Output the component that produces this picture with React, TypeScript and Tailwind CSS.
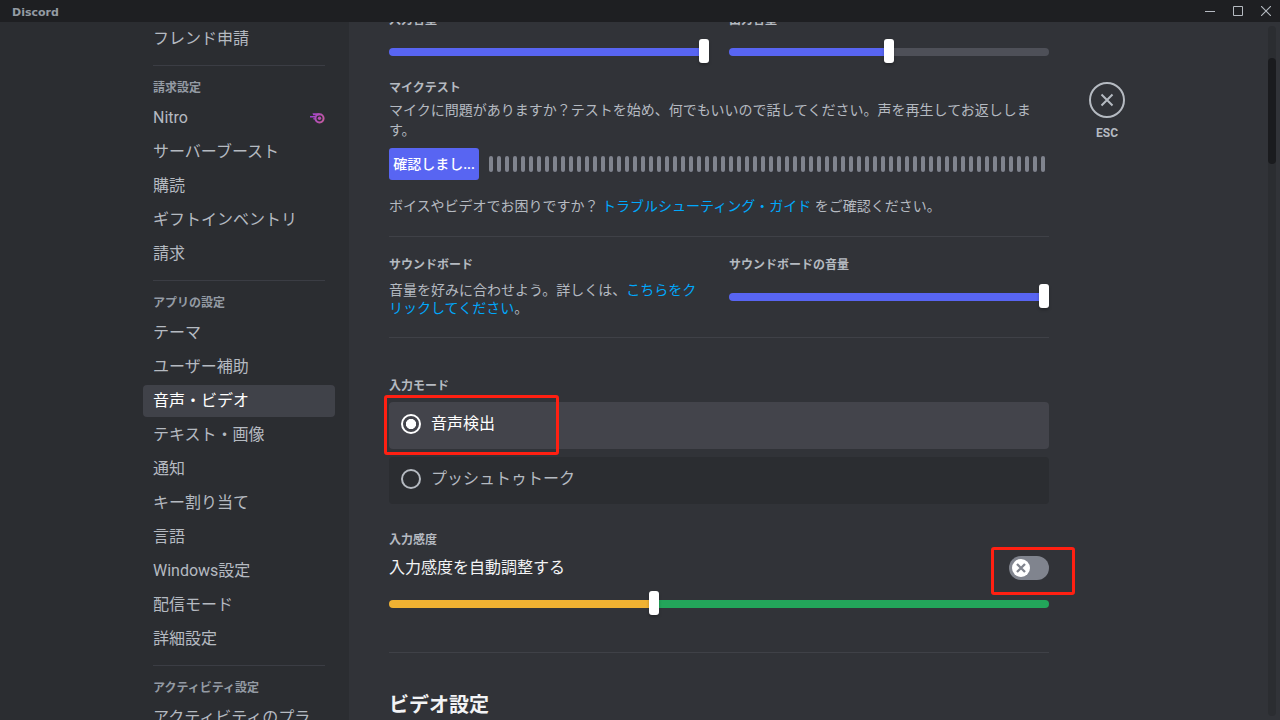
import { useState, type CSSProperties, type ReactNode } from "react";

type NavItem = { label: string; nitro?: boolean };
type NavGroup = { title?: string; items: NavItem[] };

const navGroups: NavGroup[] = [
  { items: [{ label: "フレンド申請" }] },
  {
    title: "請求設定",
    items: [
      { label: "Nitro", nitro: true },
      { label: "サーバーブースト" },
      { label: "購読" },
      { label: "ギフトインベントリ" },
      { label: "請求" },
    ],
  },
  {
    title: "アプリの設定",
    items: [
      { label: "テーマ" },
      { label: "ユーザー補助" },
      { label: "音声・ビデオ" },
      { label: "テキスト・画像" },
      { label: "通知" },
      { label: "キー割り当て" },
      { label: "言語" },
      { label: "Windows設定" },
      { label: "配信モード" },
      { label: "詳細設定" },
    ],
  },
  { title: "アクティビティ設定", items: [{ label: "アクティビティのプラ" }] },
];

function NitroIcon() {
  return (
    <svg width="16" height="16" viewBox="0 0 16 16" fill="none" aria-hidden="true">
      <defs>
        <linearGradient id="nitro" gradientUnits="userSpaceOnUse" x1="1" y1="4" x2="16" y2="10">
          <stop offset="0" stopColor="#9b3fd6" />
          <stop offset="1" stopColor="#c65c9a" />
        </linearGradient>
      </defs>
      <circle cx="10.500" cy="8.300" r="4.100" stroke="url(#nitro)" strokeWidth="2" />
      <circle cx="10.500" cy="8.300" r="1.700" fill="#b94fb4" />
      <path fill="url(#nitro)" d="M3.500 3.200H10.500V5.200H4.200zM1 6H7L6.300 7.400H1zM4 8.200H6.500V9.600H4.500z" />
    </svg>
  );
}

function TitleBar() {
  return (
    <header className="flex h-[22px] shrink-0 items-center justify-between bg-[#1e1f22] pl-3">
      <span className="pt-[3px] font-['DejaVu_Sans',sans-serif] text-[11px] leading-4 font-bold text-[#949ba4]">Discord</span>
      <div className="flex text-[#b5bac1]">
        <button type="button" aria-label="最小化" className="flex h-[22px] w-7 items-center justify-center">
          <svg width="10" height="10" viewBox="0 0 10 10" aria-hidden="true"><path d="M0 5h10v1H0z" fill="currentColor" /></svg>
        </button>
        <button type="button" aria-label="最大化" className="flex h-[22px] w-7 items-center justify-center">
          <svg width="10" height="10" viewBox="0 0 10 10" aria-hidden="true"><path d="M.5.5h9v9h-9z" fill="none" stroke="currentColor" /></svg>
        </button>
        <button type="button" aria-label="閉じる" className="flex h-[22px] w-7 items-center justify-center">
          <svg width="10" height="10" viewBox="0 0 10 10" aria-hidden="true"><path d="M0 0l10 10M10 0L0 10" stroke="currentColor" strokeWidth="1.1" /></svg>
        </button>
      </div>
    </header>
  );
}

function Sidebar() {
  const [active, setActive] = useState("音声・ビデオ");
  return (
    <div className="flex flex-[1_0_218px] justify-end overflow-hidden bg-[#2b2d31]">
      <nav aria-label="ユーザー設定" className="w-[212px] pt-px pr-[14px] pl-[6px]">
        {navGroups.map((group, index) => (
          <section key={index}>
            {index > 0 && <hr className="mx-[10px] mt-[10px] mb-2 border-[#3b3d44]" />}
            {group.title && (
              <h2 className="px-[10px] py-[6px] text-xs leading-4 font-bold text-[#949ba4]">{group.title}</h2>
            )}
            <ul>
              {group.items.map((item) => (
                <li key={item.label} className="mb-[2px]">
                  <button
                    type="button"
                    onClick={() => setActive(item.label)}
                    className={
                      item.label === active
                        ? "flex h-8 w-full items-center justify-between rounded bg-[#404249] px-[10px] text-left text-base leading-5 text-white"
                        : "flex h-8 w-full items-center justify-between rounded px-[10px] text-left text-base leading-5 text-[#b5bac1]"
                    }
                  >
                    <span>{item.label}</span>
                    {item.nitro && <NitroIcon />}
                  </button>
                </li>
              ))}
            </ul>
          </section>
        ))}
      </nav>
    </div>
  );
}

const thumb =
  "[&::-webkit-slider-thumb]:-mt-[9px] [&::-webkit-slider-thumb]:h-6 [&::-webkit-slider-thumb]:w-[10px] [&::-webkit-slider-thumb]:appearance-none [&::-webkit-slider-thumb]:rounded-[3px] [&::-webkit-slider-thumb]:bg-white [&::-webkit-slider-thumb]:shadow-[0_2px_3px_rgba(0,0,0,0.25)]";
const track =
  "[&::-webkit-slider-runnable-track]:h-2 [&::-webkit-slider-runnable-track]:rounded [&::-webkit-slider-runnable-track]:bg-[linear-gradient(to_right,var(--fill)_var(--pos),var(--rest)_var(--pos))]";

function Slider({ label, initial, max = 100, fill = "#5865f2", rest = "#4e5058" }: {
  label: string;
  initial: number;
  max?: number;
  fill?: string;
  rest?: string;
}) {
  const [value, setValue] = useState(initial);
  const style = { "--pos": `${(value / max) * 100}%`, "--fill": fill, "--rest": rest } as CSSProperties;
  return (
    <input
      type="range"
      aria-label={label}
      min={0}
      max={max}
      value={value}
      onChange={(event) => setValue(Number(event.target.value))}
      style={style}
      className={`block h-6 w-full appearance-none bg-transparent ${track} ${thumb}`}
    />
  );
}

function Label({ children }: { children: ReactNode }) {
  return <h3 className="text-xs leading-4 font-bold text-[#b5bac1]">{children}</h3>;
}

function Highlight({ className }: { className: string }) {
  return <div aria-hidden="true" className={`pointer-events-none absolute rounded-[3px] border-[3px] border-[#ff2012] ${className}`} />;
}

function ModeOption({ label, checked, onSelect }: { label: string; checked: boolean; onSelect: () => void }) {
  return (
    <label
      className={
        checked
          ? "flex h-[47px] items-center gap-[10px] rounded bg-[#43444b] px-3 pb-[3px] text-base leading-5 text-white"
          : "flex h-[47px] items-center gap-[10px] rounded bg-[#2b2d31] px-3 pb-[3px] text-base leading-5 text-[#b5bac1]"
      }
    >
      <input
        type="radio"
        name="input-mode"
        checked={checked}
        onChange={onSelect}
        className="size-5 appearance-none rounded-full border-2 border-[#b5bac1] checked:border-white checked:bg-[radial-gradient(circle,#fff_42%,transparent_48%)]"
      />
      <span>{label}</span>
    </label>
  );
}

function VoiceSettings() {
  const [mode, setMode] = useState("voice");
  const [auto, setAuto] = useState(false);
  return (
    <main className="max-w-[740px] min-w-0 flex-1 px-10">
      <div className="-mt-[10px] grid grid-cols-2 gap-5">
        <div className="flex flex-col gap-3">
          <Label>入力音量</Label>
          <Slider label="入力音量" initial={100} />
        </div>
        <div className="flex flex-col gap-3">
          <Label>出力音量</Label>
          <Slider label="出力音量" initial={100} max={200} />
        </div>
      </div>

      <section className="mt-4">
        <Label>マイクテスト</Label>
        <p className="mt-1 text-sm leading-5 text-[#b5bac1]">
          マイクに問題がありますか？テストを始め、何でもいいので話してください。声を再生してお返しします。
        </p>
        <div className="mt-2 flex items-center gap-[10px]">
          <button type="button" className="h-8 w-[90px] shrink-0 rounded-[3px] bg-[#5865f2] text-sm leading-4 font-medium whitespace-nowrap text-white">
            確認しまし...
          </button>
          <div role="meter" aria-label="マイク入力レベル" aria-valuenow={0} className="flex flex-1 justify-between pr-1">
            {Array.from({ length: 70 }, (_, i) => (
              <span key={i} className="h-4 w-1 rounded-sm bg-[#80848e]" />
            ))}
          </div>
        </div>
        <p className="mt-4 text-sm leading-5 text-[#b5bac1]">
          ボイスやビデオでお困りですか？ <a href="#guide" className="text-[#00a8fc]">トラブルシューティング・ガイド</a> をご確認ください。
        </p>
      </section>

      <hr className="mt-5 border-[#3f4147]" />

      <section className="mt-5 grid grid-cols-2 gap-5">
        <div>
          <Label>サウンドボード</Label>
          <p className="mt-2 text-sm leading-[18px] text-[#b5bac1]">
            音量を好みに合わせよう。詳しくは、<a href="#soundboard" className="text-[#00a8fc]">こちらをクリックしてください</a>。
          </p>
        </div>
        <div>
          <Label>サウンドボードの音量</Label>
          <div className="mt-3">
            <Slider label="サウンドボードの音量" initial={100} />
          </div>
        </div>
      </section>

      <hr className="mt-5 border-[#3f4147]" />

      <section className="mt-10">
        <Label>入力モード</Label>
        <div className="relative mt-2 flex flex-col gap-2">
          <ModeOption label="音声検出" checked={mode === "voice"} onSelect={() => setMode("voice")} />
          <ModeOption label="プッシュトゥトーク" checked={mode === "push"} onSelect={() => setMode("push")} />
          <Highlight className="-top-[7px] -left-[5px] h-[60px] w-[175px]" />
        </div>
      </section>

      <section className="mt-7">
        <Label>入力感度</Label>
        <div className="mt-2 flex items-center justify-between">
          <label htmlFor="auto" className="text-base leading-6 text-[#f2f3f5]">入力感度を自動調整する</label>
          <div className="relative">
            <button
              id="auto"
              type="button"
              role="switch"
              aria-checked={auto}
              onClick={() => setAuto(!auto)}
              className={
                auto
                  ? "flex h-6 w-10 items-center justify-end rounded-full bg-[#23a55a] px-[3px]"
                  : "flex h-6 w-10 items-center rounded-full bg-[#80848e] px-[3px]"
              }
            >
              <svg width="18" height="18" viewBox="0 0 18 18" aria-hidden="true">
                <circle cx="9" cy="9" r="9" fill="#fff" />
                <path d="M5 5l8 8M13 5l-8 8" stroke="#80848e" strokeWidth="2.300" />
              </svg>
            </button>
            <Highlight className="-top-[9px] -left-[18px] h-12 w-[84px]" />
          </div>
        </div>
        <div className="mt-3">
          <Slider label="入力感度" initial={40} fill="#f0b232" rest="#23a55a" />
        </div>
      </section>

      <hr className="mt-9 border-[#3f4147]" />

      <h2 className="mt-10 text-xl leading-6 font-bold text-[#f2f3f5]">ビデオ設定</h2>
    </main>
  );
}

function CloseControl() {
  return (
    <button type="button" className="mt-[60px] flex w-9 shrink-0 flex-col items-center gap-[7px] self-start text-[#b5bac1]">
      <svg width="36" height="36" viewBox="0 0 36 36" fill="none" stroke="currentColor" aria-hidden="true">
        <circle cx="18" cy="18" r="17" strokeWidth="2" />
        <path d="M12.500 12.500l11 11M23.500 12.500l-11 11" strokeWidth="2" />
      </svg>
      <span className="text-xs leading-4 font-bold">ESC</span>
    </button>
  );
}

export default function App() {
  return (
    <div className="flex h-screen flex-col overflow-hidden bg-[#313338] font-[Roboto,'Noto_Sans_CJK_JP',sans-serif]">
      <TitleBar />
      <div className="flex min-h-0 flex-1">
        <Sidebar />
        <div className="flex min-w-0 flex-[1_1_800px] overflow-hidden">
          <VoiceSettings />
          <CloseControl />
          <div className="mt-1 mr-1 mb-1 ml-auto w-2 rounded bg-[#2b2d31] pt-8" aria-hidden="true">
            <div className="h-[106px] rounded bg-[#1a1b1e]" />
          </div>
        </div>
      </div>
    </div>
  );
}
